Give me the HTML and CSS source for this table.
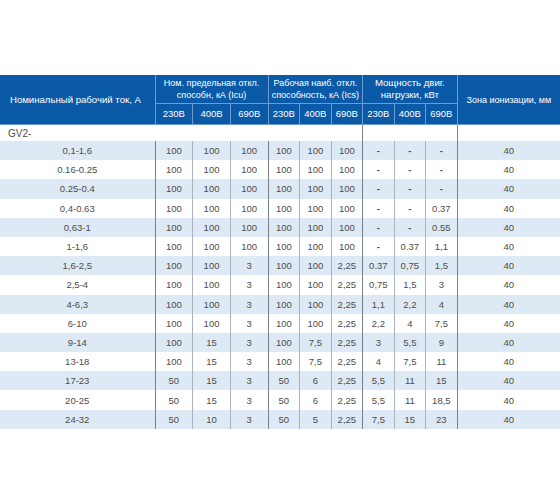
FILE: index.html
```html
<!DOCTYPE html>
<html lang="ru">
<head>
<meta charset="utf-8">
<link rel="stylesheet" href="styles.css">
</head>
<body>
<div class="page">
<table class="spec">
  <colgroup>
    <col class="c-name">
    <col class="c-a"><col class="c-a"><col class="c-a">
    <col class="c-b"><col class="c-b"><col class="c-b">
    <col class="c-b"><col class="c-b"><col class="c-b">
    <col class="c-zone">
  </colgroup>
  <thead>
    <tr class="h1">
      <th rowspan="2" class="hname">Номинальный рабочий ток, А</th>
      <th colspan="3">Ном. предельная откл.<br>способн, кА (Icu)</th>
      <th colspan="3">Рабочая наиб. откл.<br>способность, кА (Ics)</th>
      <th colspan="3" class="hbig">Мощность двиг.<br>нагрузки, кВт</th>
      <th rowspan="2">Зона ионизации, мм</th>
    </tr>
    <tr class="h2">
      <th>230В</th><th>400В</th><th>690В</th>
      <th>230В</th><th>400В</th><th>690В</th>
      <th>230В</th><th>400В</th><th>690В</th>
    </tr>
  </thead>
  <tbody>
    <tr class="grp">
      <td colspan="7" class="gname">GV2-</td>
      <td colspan="3" class="g"></td>
      <td class="g"></td>
    </tr>
    <tr><td class="g">0,1-1,6</td><td class="g">100</td><td>100</td><td>100</td><td class="g">100</td><td>100</td><td>100</td><td class="g dash">-</td><td class="dash">-</td><td class="dash">-</td><td class="g">40</td></tr>
    <tr><td class="g">0.16-0.25</td><td class="g">100</td><td>100</td><td>100</td><td class="g">100</td><td>100</td><td>100</td><td class="g dash">-</td><td class="dash">-</td><td class="dash">-</td><td class="g">40</td></tr>
    <tr><td class="g">0.25-0.4</td><td class="g">100</td><td>100</td><td>100</td><td class="g">100</td><td>100</td><td>100</td><td class="g dash">-</td><td class="dash">-</td><td class="dash">-</td><td class="g">40</td></tr>
    <tr><td class="g">0,4-0.63</td><td class="g">100</td><td>100</td><td>100</td><td class="g">100</td><td>100</td><td>100</td><td class="g dash">-</td><td class="dash">-</td><td>0.37</td><td class="g">40</td></tr>
    <tr><td class="g">0,63-1</td><td class="g">100</td><td>100</td><td>100</td><td class="g">100</td><td>100</td><td>100</td><td class="g dash">-</td><td class="dash">-</td><td>0.55</td><td class="g">40</td></tr>
    <tr><td class="g">1-1,6</td><td class="g">100</td><td>100</td><td>100</td><td class="g">100</td><td>100</td><td>100</td><td class="g dash">-</td><td>0.37</td><td>1,1</td><td class="g">40</td></tr>
    <tr><td class="g">1,6-2,5</td><td class="g">100</td><td>100</td><td>3</td><td class="g">100</td><td>100</td><td>2,25</td><td class="g">0.37</td><td>0,75</td><td>1,5</td><td class="g">40</td></tr>
    <tr><td class="g">2,5-4</td><td class="g">100</td><td>100</td><td>3</td><td class="g">100</td><td>100</td><td>2,25</td><td class="g">0,75</td><td>1,5</td><td>3</td><td class="g">40</td></tr>
    <tr><td class="g">4-6,3</td><td class="g">100</td><td>100</td><td>3</td><td class="g">100</td><td>100</td><td>2,25</td><td class="g">1,1</td><td>2,2</td><td>4</td><td class="g">40</td></tr>
    <tr><td class="g">6-10</td><td class="g">100</td><td>100</td><td>3</td><td class="g">100</td><td>100</td><td>2,25</td><td class="g">2,2</td><td>4</td><td>7,5</td><td class="g">40</td></tr>
    <tr><td class="g">9-14</td><td class="g">100</td><td>15</td><td>3</td><td class="g">100</td><td>7,5</td><td>2,25</td><td class="g">3</td><td>5,5</td><td>9</td><td class="g">40</td></tr>
    <tr><td class="g">13-18</td><td class="g">100</td><td>15</td><td>3</td><td class="g">100</td><td>7,5</td><td>2,25</td><td class="g">4</td><td>7,5</td><td>11</td><td class="g">40</td></tr>
    <tr><td class="g">17-23</td><td class="g">50</td><td>15</td><td>3</td><td class="g">50</td><td>6</td><td>2,25</td><td class="g">5,5</td><td>11</td><td>15</td><td class="g">40</td></tr>
    <tr><td class="g">20-25</td><td class="g">50</td><td>15</td><td>3</td><td class="g">50</td><td>6</td><td>2,25</td><td class="g">5,5</td><td>11</td><td>18,5</td><td class="g">40</td></tr>
    <tr><td class="g">24-32</td><td class="g">50</td><td>10</td><td>3</td><td class="g">50</td><td>5</td><td>2,25</td><td class="g">7,5</td><td>15</td><td>23</td><td class="g">40</td></tr>
  </tbody>
</table>
</div>
</body>
</html>
```

FILE: styles.css
```css
html, body {
  margin: 0;
  padding: 0;
  background: #ffffff;
}

.page {
  padding-top: 75px;
  font-family: "Liberation Sans", Arial, sans-serif;
}

.spec {
  width: 560px;
  border-collapse: collapse;
  table-layout: fixed;
}

.c-name { width: 155px; }
.c-a { width: 37.7px; }
.c-b { width: 31.5px; }
.c-zone { width: 103px; }

.spec thead th {
  background: #0a5aa8;
  color: #ffffff;
  font-weight: normal;
  text-align: center;
  vertical-align: middle;
  padding: 0;
  border: 1px solid #6f9cd0;
  font-size: 9px;
  line-height: 12px;
}

.spec thead tr:first-child th {
  border-top: none;
}

.spec thead th:first-child {
  border-left: none;
}

.spec thead tr.h1 th:last-child {
  border-right: none;
}

.spec thead .h1 th {
  height: 28px;
}

.spec thead .h2 th {
  height: 20px;
  font-size: 9.5px;
}

.spec thead .hname {
  font-size: 9.6px;
  text-align: left;
  padding-left: 10px;
}

.spec thead .hbig {
  font-size: 9.6px;
}

.spec tbody td {
  font-size: 9.5px;
  color: #4d4d4d;
  text-align: center;
  padding: 0;
  height: 19.2px;
  border-left: 1px solid #aab4be;
}

.spec tbody td.g {
  border-left: 1px solid #77828e;
}

.spec tbody td:first-child {
  border-left: none;
}

.spec tbody tr:nth-child(even) td {
  background: #dde9f4;
}

.spec tbody tr.grp td {
  height: 16px;
  background: #ffffff;
}

.spec tbody td.gname {
  text-align: left;
  padding-left: 8px;
  font-size: 10px;
}

.spec tbody td.dash {
  font-weight: bold;
}
```
